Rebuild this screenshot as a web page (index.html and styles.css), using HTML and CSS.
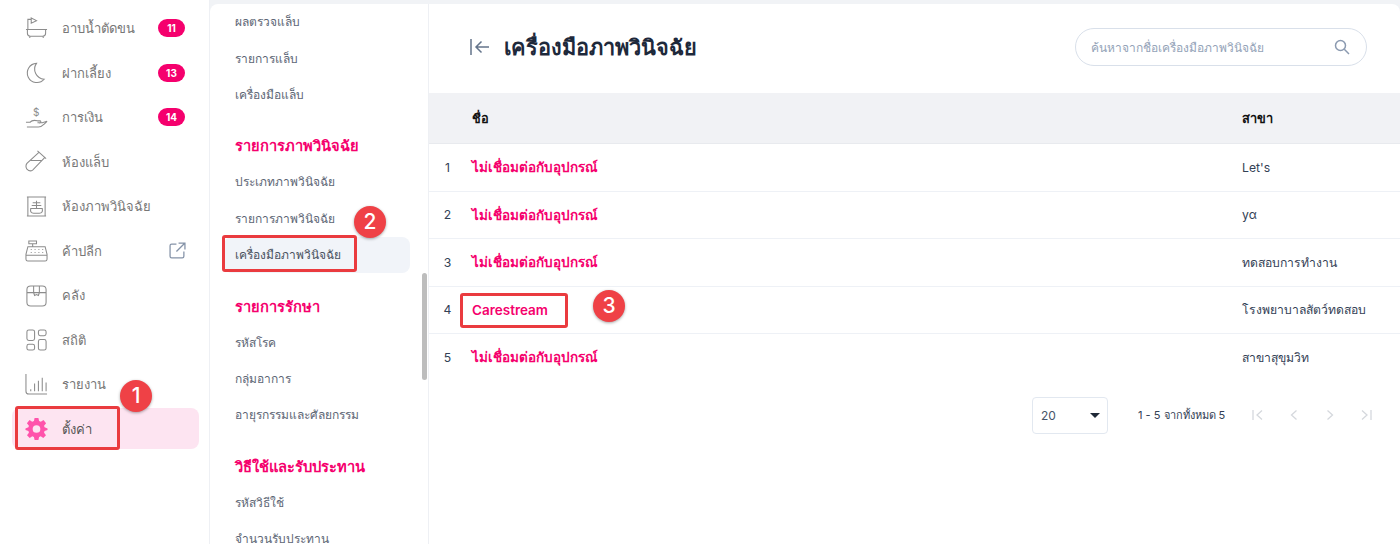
FILE: index.html
```html
<!DOCTYPE html>
<html lang="th">
<head>
  <meta charset="UTF-8" />
  <title>เครื่องมือภาพวินิจฉัย</title>
  <link rel="stylesheet" href="styles.css">
</head>
<body>
  <div class="app">

    <!-- Main Sidebar -->
    <nav class="sidebar">
      <a class="nav-item">
        <svg class="nav-icon" viewBox="0 0 24 24"><path d="M3 12.500V2.500h3.500M6.500 1l5.500 2.800-5.500 2.700zM1 13h22M2.500 13v4q0 3 3 3h13q3 0 3-3v-4M5 20v2M19 20v2"/></svg>
        <span class="nav-label">อาบน้ำตัดขน</span><span class="badge">11</span>
      </a>
      <a class="nav-item">
        <svg class="nav-icon" viewBox="0 0 24 24"><path d="M12 2.500A10 10 0 1 0 20 19 A10.500 10.500 0 0 1 12 2.500z"/></svg>
        <span class="nav-label">ฝากเลี้ยง</span><span class="badge">13</span>
      </a>
      <a class="nav-item">
        <svg class="nav-icon" viewBox="0 0 24 24"><path d="M1 17h5M2 22h12q3 0 6-3l3-3-5 1.500h-5M5 17q3-3 8-1.500h3q1.500 1.500-1 2.500"/></svg>
        <span class="nav-dollar">$</span>
        <span class="nav-label">การเงิน</span><span class="badge">14</span>
      </a>
      <a class="nav-item">
        <svg class="nav-icon" viewBox="0 0 24 24"><path d="M13 1l9 8M14.500 2.500L2 14q-2 3 0 6 3 3 6 1L20.500 8M6 11h11"/></svg>
        <span class="nav-label">ห้องแล็บ</span>
      </a>
      <a class="nav-item">
        <svg class="nav-icon" viewBox="0 0 24 24"><path d="M2 2h20M2 22h20M3 2v20M21 2v20M12 6v8M8 8h8M7 11h10M6 14q-1 5 3 5h6q4 0 3-5z"/></svg>
        <span class="nav-label">ห้องภาพวินิจฉัย</span>
      </a>
      <a class="nav-item">
        <svg class="nav-icon" viewBox="0 0 24 24"><path d="M4 2h8v3H4zM8 5v3M3 8h18l2 8v5q0 2-2 2H3q-2 0-2-2v-5zM1 17h22M6 11h1M10 11h1M14 11h1M18 11h1M6 14h1M10 14h1M14 14h1M18 14h1"/></svg>
        <span class="nav-label">ค้าปลีก</span>
        <svg class="ext-icon" viewBox="0 0 16 16"><path d="M7 2H2.500Q1 2 1 3.500v10Q1 15 2.500 15h10q1.500 0 1.500-1.500V9M9 1h6v6M15 1L7 9"/></svg>
      </a>
      <a class="nav-item">
        <svg class="nav-icon" viewBox="0 0 24 24"><path d="M6 2h12q4 0 4 4v13q0 4-4 4H6q-4 0-4-4V6q0-4 4-4zM2 9h20M9 2v7l1 3 2-1 2 1 1-3V2"/></svg>
        <span class="nav-label">คลัง</span>
      </a>
      <a class="nav-item">
        <svg class="nav-icon" viewBox="0 0 24 24"><rect x="2" y="2" width="8" height="11" rx="2"/><rect x="14" y="2" width="8" height="6" rx="2"/><rect x="2" y="17" width="8" height="6" rx="2"/><rect x="14" y="12" width="8" height="11" rx="2"/></svg>
        <span class="nav-label">สถิติ</span>
      </a>
      <a class="nav-item">
        <svg class="nav-icon" viewBox="0 0 24 24"><path d="M1 1v18q0 3 3 3h19M6 17v2M10 11v8M14 8v11M18 5v14M22 10v9"/></svg>
        <span class="nav-label">รายงาน</span>
      </a>
      <a class="nav-item active">
        <svg class="nav-icon gear" viewBox="0 0 24 24"><path fill-rule="evenodd" d="M10 1h4l.7 3.200 1.800.8L19.300 3.200 22 6.500l-2.100 2.500.5 1.700L23.500 12v1.500l-3.100 1.200-.5 1.700 2 2.600-2.800 2.800-2.700-1.700-1.700.8L14 24h-4l-.7-3.100-1.700-.8-2.700 1.700-2.800-2.800 2-2.600-.5-1.700L.5 13.500V12l3.100-1.300.5-1.700L2 6.500l2.700-3.300L7.500 5l1.800-.8zM12 8.500a4 4 0 1 0 0 8 4 4 0 0 0 0-8z"/></svg>
        <span class="nav-label">ตั้งค่า</span>
      </a>
    </nav>

    <div class="content">
      <!-- Sub Menu -->
      <aside class="submenu">
        <a class="sub-item">ผลตรวจแล็บ</a>
        <a class="sub-item">รายการแล็บ</a>
        <a class="sub-item">เครื่องมือแล็บ</a>

        <h3 class="sub-title">รายการภาพวินิจฉัย</h3>
        <a class="sub-item">ประเภทภาพวินิจฉัย</a>
        <a class="sub-item">รายการภาพวินิจฉัย</a>
        <a class="sub-item selected">เครื่องมือภาพวินิจฉัย</a>

        <h3 class="sub-title">รายการรักษา</h3>
        <a class="sub-item">รหัสโรค</a>
        <a class="sub-item">กลุ่มอาการ</a>
        <a class="sub-item">อายุรกรรมและศัลยกรรม</a>

        <h3 class="sub-title">วิธีใช้และรับประทาน</h3>
        <a class="sub-item">รหัสวิธีใช้</a>
        <a class="sub-item">จำนวนรับประทาน</a>
        <div class="scroll-thumb"></div>
      </aside>

      <!-- Main Content -->
      <main class="main">
        <header class="page-head">
          <svg class="collapse-icon" viewBox="0 0 20 16"><path d="M1 0v16M19 8H6M11.500 2.500L6 8l5.500 5.500"/></svg>
          <h1>เครื่องมือภาพวินิจฉัย</h1>
          <div class="search">
            <span>ค้นหาจากชื่อเครื่องมือภาพวินิจฉัย</span>
            <svg class="search-icon" viewBox="0 0 16 16"><circle cx="6.500" cy="6.500" r="5"/><path d="M10.300 10.300L15 15"/></svg>
          </div>
        </header>

        <table class="data-table">
          <colgroup><col class="col-no"><col class="col-name"><col></colgroup>
          <thead>
            <tr><th></th><th>ชื่อ</th><th>สาขา</th></tr>
          </thead>
          <tbody>
            <tr><td>1</td><td class="link">ไม่เชื่อมต่อกับอุปกรณ์</td><td>Let's</td></tr>
            <tr><td>2</td><td class="link">ไม่เชื่อมต่อกับอุปกรณ์</td><td>yα</td></tr>
            <tr><td>3</td><td class="link">ไม่เชื่อมต่อกับอุปกรณ์</td><td>ทดสอบการทำงาน</td></tr>
            <tr><td>4</td><td class="link">Carestream</td><td>โรงพยาบาลสัตว์ทดสอบ</td></tr>
            <tr><td>5</td><td class="link">ไม่เชื่อมต่อกับอุปกรณ์</td><td>สาขาสุขุมวิท</td></tr>
          </tbody>
        </table>

        <div class="pager">
          <div class="page-size">20<i class="caret"></i></div>
          <span class="page-info">1 - 5 จากทั้งหมด 5</span>
          <div class="page-btns">
            <svg viewBox="0 0 12 12"><path d="M1 1v10M10 1.500L5 6l5 4.500"/></svg>
            <svg viewBox="0 0 12 12"><path d="M8.500 1.500L3.500 6l5 4.500"/></svg>
            <svg viewBox="0 0 12 12"><path d="M3.500 1.500L8.500 6l-5 4.500"/></svg>
            <svg viewBox="0 0 12 12"><path d="M2 1.500L7 6l-5 4.500M11 1v10"/></svg>
          </div>
        </div>
      </main>
    </div>
  </div>

  <!-- Annotations drawn over the screen -->
  <div class="mark mark-1"></div>
  <div class="mark mark-2"></div>
  <div class="mark mark-3"></div>
  <div class="num num-1">1</div>
  <div class="num num-2">2</div>
  <div class="num num-3">3</div>
</body>
</html>
```
FILE: styles.css
```css
html, body {
  height: 100%;
  margin: 0;
  overflow: hidden;
  font-family: Inter, "Noto Sans", sans-serif;
  background: white;
}

.app {
  display: flex;
  height: 544px;
}

/* Main Sidebar */
.sidebar {
  width: 210px;
  flex-shrink: 0;
  padding: 7.5px 10px 0 12px;
  box-sizing: border-box;
  border-right: 1px solid #eef0f4;
  display: flex;
  flex-direction: column;
  gap: 3.5px;
}

.nav-item {
  position: relative;
  display: flex;
  align-items: center;
  height: 41px;
  flex-shrink: 0;
  padding: 0 14px 0 13px;
  border-radius: 8px;
  color: #777;
  font-size: 13px;
}

.nav-icon {
  width: 23px;
  height: 23px;
  margin-right: 14px;
  fill: none;
  stroke: #8c8c8c;
  stroke-width: 1.1;
}

.nav-dollar {
  position: absolute;
  left: 21px;
  top: 9px;
  font-size: 10px;
  color: #8c8c8c;
}

.nav-label {
  flex: 1;
  padding-top: 1px;
}

.badge {
  width: 27px;
  height: 18px;
  border-radius: 9px;
  background: #f5006d;
  color: white;
  font-size: 10px;
  font-weight: 700;
  line-height: 18px;
  text-align: center;
}

.ext-icon {
  width: 17px;
  height: 17px;
  margin-right: -1px;
  fill: none;
  stroke: #8593a8;
  stroke-width: 1.2;
}

.nav-item.active {
  background: #fde4f1;
  color: #555;
}

.gear {
  fill: #ff52ab;
  stroke: none;
}

/* Sub Menu */
.content {
  flex: 1;
  display: flex;
  padding-top: 4px;
  background: #f1f3f6;
  min-width: 0;
}

.submenu {
  position: relative;
  width: 219px;
  flex-shrink: 0;
  box-sizing: border-box;
  padding: 0.4px 18px 0 14px;
  overflow: hidden;
  background: white;
  border-right: 1px solid #eef0f4;
  border-radius: 8px 0 0 0;
}

.sub-item {
  display: block;
  height: 36.300px;
  line-height: 35px;
  padding-left: 11px;
  border-radius: 8px;
  color: #5d6675;
  font-size: 12px;
}

.sub-item.selected {
  background: #f1f4f9;
  color: #4a5260;
}

.sub-title {
  height: 36px;
  line-height: 36px;
  margin: 15.200px 0 0;
  padding-left: 11px;
  color: #f5006d;
  font-size: 14.700px;
  font-weight: 700;
}

.scroll-thumb {
  position: absolute;
  top: 269px;
  right: 1px;
  width: 5px;
  height: 107px;
  border-radius: 3px;
  background: #bdbdbd;
}

/* Main Content */
.main {
  flex: 1;
  min-width: 0;
  background: white;
  border-radius: 0 8px 0 0;
}

.page-head {
  display: flex;
  align-items: center;
  height: 89px;
  padding: 0 33px 3px 41px;
  box-sizing: border-box;
}

.collapse-icon {
  width: 20px;
  height: 16px;
  margin-right: 14px;
  fill: none;
  stroke: #64748b;
  stroke-width: 1.500;
}

.page-head h1 {
  flex: 1;
  margin: 0;
  color: #1e293b;
  font-size: 21.700px;
  font-weight: 700;
}

.search {
  display: flex;
  align-items: center;
  justify-content: space-between;
  width: 292px;
  height: 38px;
  box-sizing: border-box;
  padding: 0 16px 0 15px;
  border: 1px solid #d9e0ea;
  border-radius: 19px;
  color: #94a3b8;
  font-size: 12px;
}

.search-icon {
  width: 16px;
  height: 16px;
  fill: none;
  stroke: #8b9ab0;
  stroke-width: 1.500;
}

.data-table {
  width: 100%;
  border-collapse: collapse;
  table-layout: fixed;
  font-size: 12.200px;
  color: #334155;
}

.col-no { width: 43px; }
.col-name { width: 770px; }

.data-table th {
  height: 50px;
  padding: 0;
  background: #f1f2f5;
  border-bottom: 1px solid #e8eaee;
  color: #111;
  font-size: 12.800px;
  font-weight: 700;
  text-align: left;
}

.data-table td {
  height: 46.500px;
  padding: 0;
  border-bottom: 1px solid #eef1f6;
}

.data-table tr:last-child td {
  border-bottom: none;
}

.data-table td:first-child {
  padding-right: 6px;
  text-align: center;
}

.data-table td.link {
  color: #f5006d;
  font-size: 13.500px;
  font-weight: 600;
}

/* Pagination */
.pager {
  display: flex;
  align-items: center;
  margin-top: 16px;
  padding-left: 603px;
}

.page-size {
  display: flex;
  align-items: center;
  justify-content: space-between;
  width: 76px;
  height: 37px;
  box-sizing: border-box;
  padding: 0 7px 0 8px;
  border: 1px solid #e2e8f0;
  border-radius: 4px;
  color: #475569;
  font-size: 12px;
}

.caret {
  width: 0;
  height: 0;
  border-left: 5px solid transparent;
  border-right: 5px solid transparent;
  border-top: 5px solid #1f2937;
}

.page-info {
  width: 87px;
  margin-left: 30px;
  color: #334155;
  font-size: 11px;
  white-space: nowrap;
}

.page-btns {
  display: flex;
  gap: 24px;
  margin-left: 27px;
}

.page-btns svg {
  width: 12px;
  height: 12px;
  fill: none;
  stroke: #d5d8dd;
  stroke-width: 1.300;
}

/* Annotations */
.mark {
  position: absolute;
  box-sizing: border-box;
  border: 3px solid #ea3b3f;
  border-radius: 3px;
}

.mark-1 { left: 15px; top: 406px; width: 105px; height: 44px; }
.mark-2 { left: 222px; top: 235px; width: 135px; height: 37px; }
.mark-3 { left: 460px; top: 293px; width: 108px; height: 35px; }

.num {
  position: absolute;
  width: 32px;
  height: 32px;
  border-radius: 50%;
  background: #ef4146;
  box-shadow: 0 1px 3px rgba(0, 0, 0, 0.35);
  color: white;
  font-size: 21px;
  font-weight: 500;
  line-height: 32px;
  text-align: center;
}

.num-1 { left: 120px; top: 380px; }
.num-2 { left: 354px; top: 206px; }
.num-3 { left: 593px; top: 290px; }
```
